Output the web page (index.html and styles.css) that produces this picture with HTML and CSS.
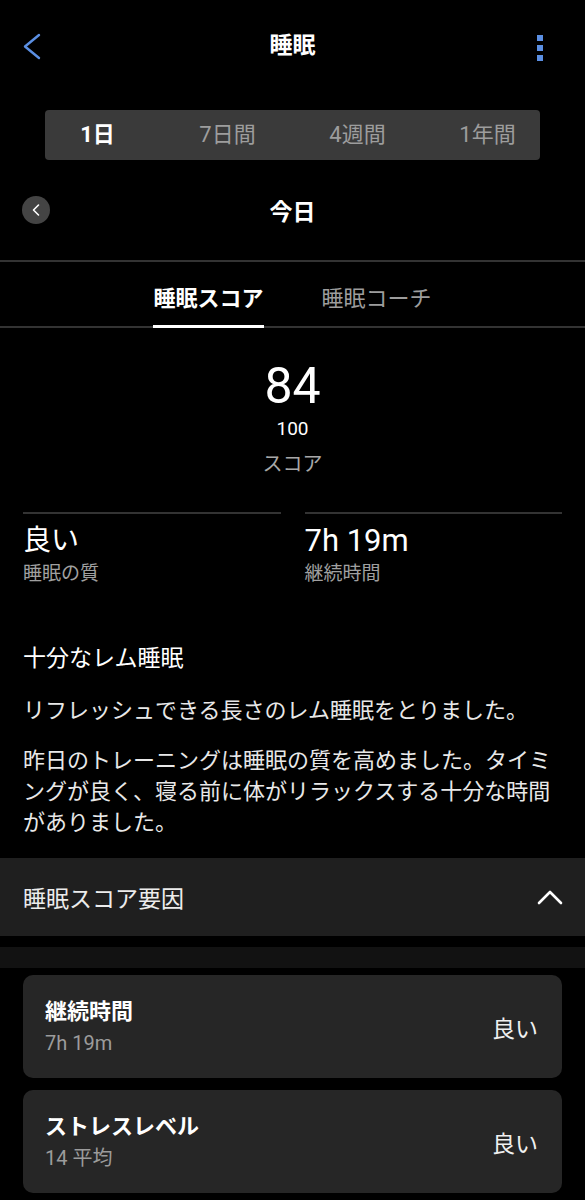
FILE: index.html
```html
<!DOCTYPE html>
<html lang="ja">
<head>
<meta charset="utf-8">
<title>睡眠</title>
<link rel="stylesheet" href="styles.css">
</head>
<body>
<div class="app">
  <header class="header">
    <svg class="back" width="20" height="30" viewBox="0 0 20 30"><path d="M17 4 L3 15.5 L17 27" fill="none" stroke="#5b8fe3" stroke-width="2.4" stroke-linecap="round" stroke-linejoin="round"/></svg>
    <h1 class="title">睡眠</h1>
    <svg class="kebab" width="10" height="30" viewBox="0 0 10 30"><rect x="2" y="4" width="6" height="6" fill="#5b8fe3"/><rect x="2" y="14" width="6" height="6" fill="#5b8fe3"/><rect x="2" y="24" width="6" height="6" fill="#5b8fe3"/></svg>
  </header>

  <div class="segment">
    <div class="seg active">1日</div>
    <div class="seg">7日間</div>
    <div class="seg">4週間</div>
    <div class="seg">1年間</div>
  </div>

  <div class="daterow">
    <div class="circle"><svg width="28" height="28" viewBox="0 0 28 28"><path d="M16.5 9 L11.5 14 L16.5 19" fill="none" stroke="#fff" stroke-width="1.6" stroke-linecap="round" stroke-linejoin="round"/></svg></div>
    <div class="date">今日</div>
    <div></div>
  </div>

  <nav class="tabs">
    <div class="tab active">睡眠スコア</div>
    <div class="tab">睡眠コーチ</div>
  </nav>

  <section class="score">
    <div class="big">84</div>
    <div class="max">100</div>
    <div class="label">スコア</div>
  </section>

  <section class="stats">
    <div class="stat">
      <div class="stat-val">良い</div>
      <div class="stat-lbl">睡眠の質</div>
    </div>
    <div class="stat">
      <div class="stat-val latin">7h 19m</div>
      <div class="stat-lbl">継続時間</div>
    </div>
  </section>

  <section class="insight">
    <h2 class="insight-title">十分なレム睡眠</h2>
    <p class="para">リフレッシュできる長さのレム睡眠をとりました。</p>
    <p class="para">昨日のトレーニングは睡眠の質を高めました。タイミングが良く、寝る前に体がリラックスする十分な時間がありました。</p>
  </section>

  <div class="factors">
    <div class="factors-title">睡眠スコア要因</div>
    <svg width="26" height="16" viewBox="0 0 26 16"><path d="M2 14 L13 3 L24 14" fill="none" stroke="#fff" stroke-width="2.6" stroke-linecap="round" stroke-linejoin="round"/></svg>
  </div>
  <div class="strip"></div>

  <div class="cards">
    <div class="card">
      <div class="card-main">
        <div class="card-title">継続時間</div>
        <div class="card-sub">7h 19m</div>
      </div>
      <div class="card-val">良い</div>
    </div>
    <div class="card">
      <div class="card-main">
        <div class="card-title">ストレスレベル</div>
        <div class="card-sub">14 平均</div>
      </div>
      <div class="card-val">良い</div>
    </div>
  </div>
</div>
</body>
</html>
```
FILE: styles.css
```css
* { box-sizing: border-box; }
html, body { margin: 0; padding: 0; background: #000; }
body {
  color: #fff;
  font-family: Roboto, "Noto Sans CJK JP", sans-serif;
  width: 585px;
  overflow: hidden;
}
.app { width: 585px; }

.header {
  height: 92px;
  display: grid;
  grid-template-columns: 80px 1fr 80px;
  align-items: center;
}
.back { margin-left: 22px; }
.kebab { justify-self: end; margin-right: 40px; }
.title {
  margin: 0;
  text-align: center;
  font-size: 23px;
  font-weight: 700;
  line-height: 30px;
}

.segment {
  margin: 18px 45px 0;
  height: 50px;
  background: #3a3a3a;
  border-radius: 4px;
  display: grid;
  grid-template-columns: repeat(4, 130px);
  justify-content: center;
  align-items: center;
  font-size: 22px;
  color: #9d9d9d;
}
.seg { text-align: center; line-height: 50px; }
.seg.active { color: #fff; font-weight: 700; }

.daterow {
  height: 100px;
  display: grid;
  grid-template-columns: 80px 1fr 80px;
  align-items: center;
  border-bottom: 2px solid #333;
  box-sizing: content-box;
}
.circle {
  margin-left: 22px;
  width: 28px;
  height: 28px;
  border-radius: 50%;
  background: #444;
  display: flex;
}
.date {
  text-align: center;
  font-size: 23px;
  font-weight: 700;
}

.tabs {
  display: flex;
  justify-content: center;
  gap: 58px;
  height: 66px;
  border-bottom: 2px solid #333;
}
.tab {
  height: 66px;
  margin-bottom: -2px;
  padding-top: 4px;
  display: flex;
  align-items: center;
  font-size: 22px;
  color: #9d9d9d;
  border-bottom: 3px solid transparent;
}
.tab.active { color: #fff; font-weight: 700; border-bottom-color: #fff; }

.score { text-align: center; padding-top: 33px; }
.big { font-size: 50px; line-height: 50px; }
.max { font-size: 19px; line-height: 22px; margin-top: 7px; }
.label { font-size: 20px; line-height: 28px; margin-top: 10px; color: #a8a8a8; }

.stats {
  display: grid;
  grid-template-columns: 1fr 1fr;
  gap: 24px;
  padding: 0 23px;
  margin-top: 34px;
}
.stat { border-top: 2px solid #333; padding-top: 10px; }
.stat-val { font-size: 28px; line-height: 34px; height: 34px; }
.stat-val.latin { font-size: 31px; }
.stat-lbl { font-size: 19px; line-height: 24px; margin-top: 4px; color: #a0a0a0; }

.insight { padding: 0 23px; margin-top: 57px; }
.insight-title { margin: 0 0 20px; font-size: 23px; font-weight: 400; line-height: 32px; color: #fff; }
.para { margin: 0 0 19px; font-size: 22px; line-height: 31px; color: #e8e8e8; }

.factors {
  margin-top: 20px;
  height: 78px;
  background: #1f1f1f;
  padding: 0 22px 0 23px;
  display: flex;
  justify-content: space-between;
  align-items: center;
}
.factors-title { font-size: 23px; color: #ececec; }
.strip { height: 21px; background: #121212; margin-top: 11px; }

.cards { padding: 7px 23px 0; display: flex; flex-direction: column; gap: 12px; }
.card {
  height: 103px;
  background: #262626;
  border-radius: 10px;
  padding: 0 24px 0 22px;
  display: flex;
  justify-content: space-between;
  align-items: center;
}
.card-title { font-size: 22px; font-weight: 700; line-height: 28px; }
.card-sub { font-size: 20px; line-height: 26px; color: #9c9c9c; margin-top: 4px; }
.card-val { font-size: 23px; color: #f0f0f0; }
```
